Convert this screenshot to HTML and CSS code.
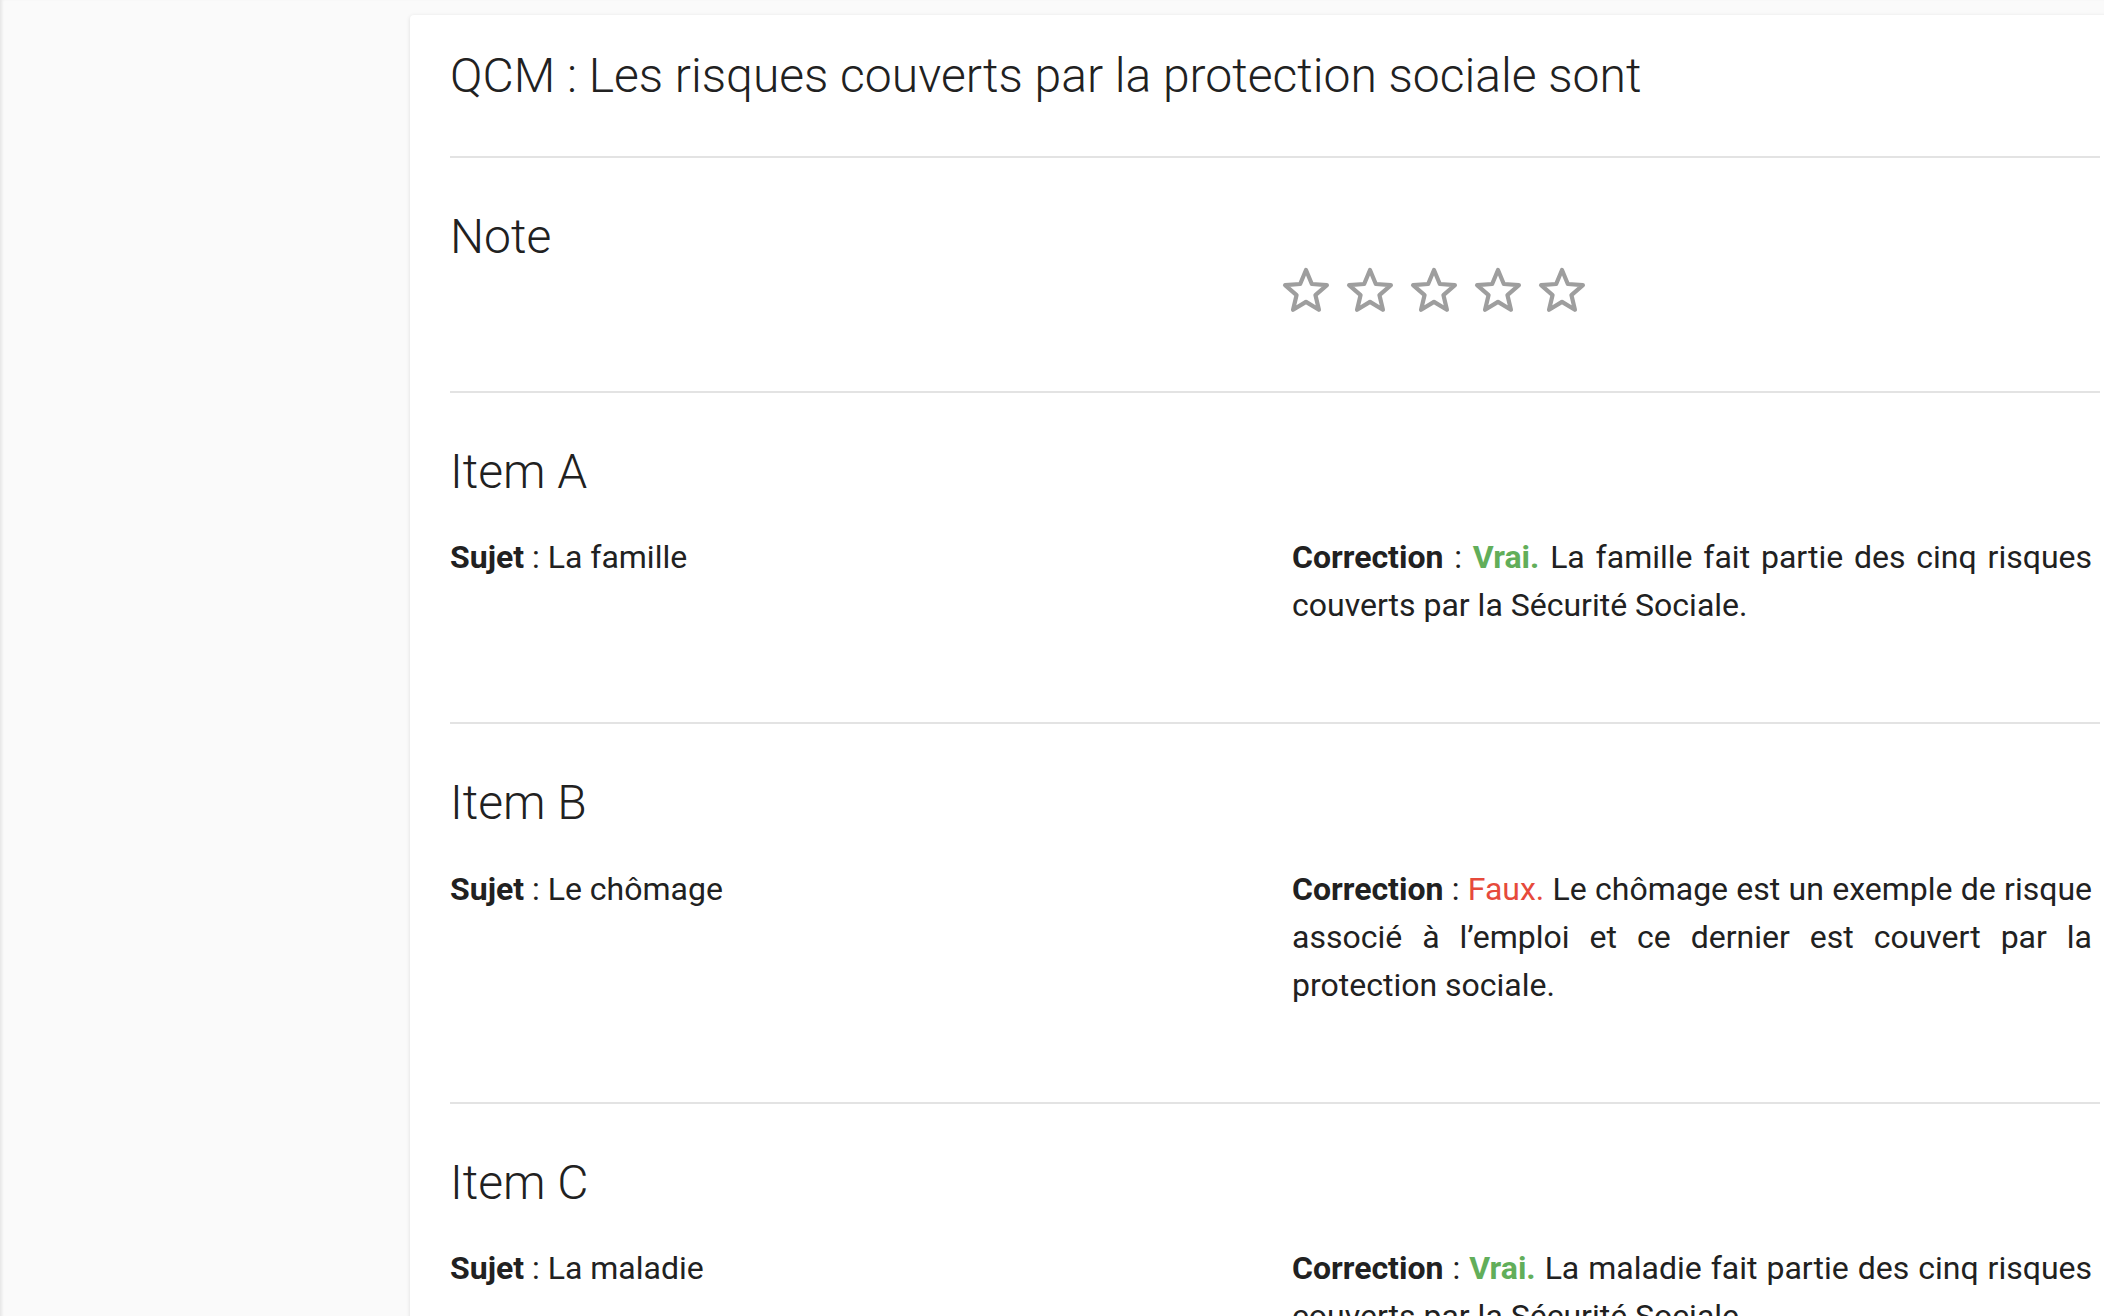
FILE: index.html
```html
<!DOCTYPE html>
<html lang="fr">
<head>
<meta charset="utf-8">
<title>QCM</title>
<link rel="stylesheet" href="styles.css">
</head>
<body>
<div class="page">
  <aside class="side"></aside>
  <main class="main">
    <article class="card">
      <section class="block head">
        <h1 class="title">QCM : Les risques couverts par la protection sociale sont</h1>
      </section>

      <section class="block note">
        <div class="grid">
          <h2 class="h-note">Note</h2>
          <div class="stars">
            <svg class="star" viewBox="0 0 48 48"><polygon points="24,4 29.82,17.99 44.92,19.2 33.42,29.06 36.93,43.8 24,35.9 11.07,43.8 14.58,29.06 3.08,19.2 18.18,17.99"/></svg>
            <svg class="star" viewBox="0 0 48 48"><polygon points="24,4 29.82,17.99 44.92,19.2 33.42,29.06 36.93,43.8 24,35.9 11.07,43.8 14.58,29.06 3.08,19.2 18.18,17.99"/></svg>
            <svg class="star" viewBox="0 0 48 48"><polygon points="24,4 29.82,17.99 44.92,19.2 33.42,29.06 36.93,43.8 24,35.9 11.07,43.8 14.58,29.06 3.08,19.2 18.18,17.99"/></svg>
            <svg class="star" viewBox="0 0 48 48"><polygon points="24,4 29.82,17.99 44.92,19.2 33.42,29.06 36.93,43.8 24,35.9 11.07,43.8 14.58,29.06 3.08,19.2 18.18,17.99"/></svg>
            <svg class="star" viewBox="0 0 48 48"><polygon points="24,4 29.82,17.99 44.92,19.2 33.42,29.06 36.93,43.8 24,35.9 11.07,43.8 14.58,29.06 3.08,19.2 18.18,17.99"/></svg>
          </div>
        </div>
      </section>

      <section class="block item">
        <h2 class="h-item">Item A</h2>
        <div class="grid">
          <p class="txt"><b>Sujet</b> : La famille</p>
          <p class="txt just"><b>Correction</b> : <span class="ok">Vrai.</span> La famille fait partie des cinq risques couverts par la Sécurité Sociale.</p>
        </div>
      </section>

      <section class="block item">
        <h2 class="h-item">Item B</h2>
        <div class="grid">
          <p class="txt"><b>Sujet</b> : Le chômage</p>
          <p class="txt just"><b>Correction</b> : <span class="ko">Faux.</span> Le chômage est un exemple de risque associé à l’emploi et ce dernier est couvert par la protection sociale.</p>
        </div>
      </section>

      <section class="block item">
        <h2 class="h-item">Item C</h2>
        <div class="grid">
          <p class="txt"><b>Sujet</b> : La maladie</p>
          <p class="txt just"><b>Correction</b> : <span class="ok">Vrai.</span> La maladie fait partie des cinq risques couverts par la Sécurité Sociale.</p>
        </div>
      </section>
    </article>
  </main>
</div>
</body>
</html>
```

FILE: styles.css
```css
html, body {
  margin: 0;
  padding: 0;
  overflow: hidden;
  background: #fafafa;
  font-family: Roboto, "Liberation Sans", Arial, sans-serif;
  color: #212121;
}

.page {
  display: flex;
  min-height: 100vh;
  box-shadow: inset 3px 0 3px -1px rgba(0, 0, 0, 0.08);
}

.side {
  flex: 0 0 410px;
}

.main {
  flex: 0 0 1720px;
  padding-top: 15px;
}

.card {
  background: #ffffff;
  border-radius: 4px;
  box-shadow: 0 1px 4px rgba(0, 0, 0, 0.12);
  padding: 0 30px 0 40px;
}

.block {
  border-bottom: 2px solid #e3e3e3;
}

.head {
  padding: 32px 0 51px;
}

.title {
  margin: 0;
  font-size: 48px;
  line-height: 57.6px;
  font-weight: 300;
}

.grid {
  display: grid;
  grid-template-columns: 800px 800px;
  column-gap: 42px;
}

.note {
  padding: 50px 0 77px;
}

.h-note {
  margin: 0;
  font-size: 48px;
  line-height: 57.6px;
  font-weight: 300;
}

.stars {
  display: flex;
  gap: 16px;
  margin: 58px 0 0 -10px;
}

.star {
  width: 48px;
  height: 48px;
  display: block;
}

.star polygon {
  fill: none;
  stroke: #9e9e9e;
  stroke-width: 4.2;
  stroke-linejoin: round;
}

.item {
  padding: 50px 0 93px;
}

.h-item {
  margin: 0 0 33px;
  font-size: 48px;
  line-height: 57.6px;
  font-weight: 300;
}

.txt {
  margin: 0;
  font-size: 32px;
  line-height: 48px;
  font-weight: 400;
}

.txt b {
  font-weight: 700;
}

.just {
  text-align: justify;
}

.ok {
  color: #62ae5a;
  font-weight: 700;
}

.ko {
  color: #e64a3b;
}
```
